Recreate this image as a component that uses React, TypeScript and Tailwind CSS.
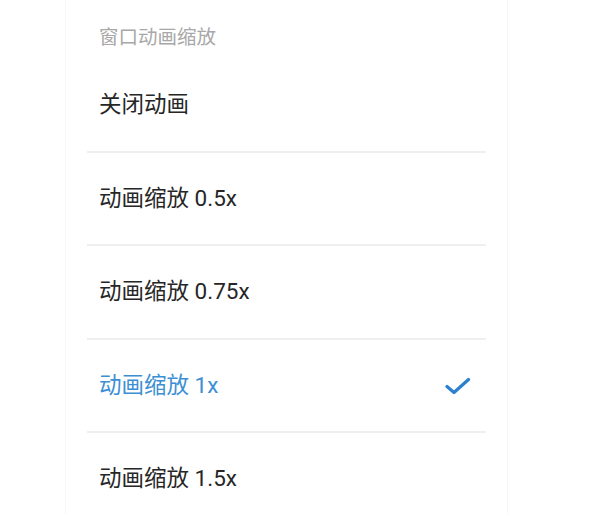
import React from "react";

const items = [
  { label: "关闭动画" },
  { label: "动画缩放 0.5x" },
  { label: "动画缩放 0.75x" },
  { label: "动画缩放 1x", selected: true },
  { label: "动画缩放 1.5x" },
];

export default function App() {
  return (
    <div
      className="w-[596px] h-[514px] overflow-hidden bg-white"
      style={{ fontFamily: 'Roboto, "Noto Sans CJK SC", sans-serif' }}
    >
      <div className="ml-[65px] w-[443px] h-[514px] border-l border-r border-[#f7f7f7] bg-white">
        <div className="h-[59px] pt-[28px] pl-[33px] text-[19.5px] leading-[19px] text-[#a8a8a8]">
          窗口动画缩放
        </div>
        {items.map((it, i) => (
          <div key={i}>
            <div
              className={
                (i % 2 === 0 ? "h-[92px]" : "h-[91px]") +
                " flex items-center justify-between pl-[33px] pr-[36px]"
              }
            >
              <span
                className={
                  it.selected
                    ? "text-[22.5px] text-[#3c8fd4]"
                    : "text-[22.5px] text-[#262626]"
                }
              >
                {it.label}
              </span>
              {it.selected && (
                <svg width="26" height="20" viewBox="0 0 26 20" fill="none">
                  <path
                    d="M2 10.5 L9 16.5 L23.5 3.5"
                    stroke="#2b80d0"
                    strokeWidth="3.2"
                    strokeLinecap="round"
                    strokeLinejoin="round"
                  />
                </svg>
              )}
            </div>
            {i < items.length - 1 && (
              <div className="mx-[21px] h-[2px] bg-[#efefef]" />
            )}
          </div>
        ))}
      </div>
    </div>
  );
}
